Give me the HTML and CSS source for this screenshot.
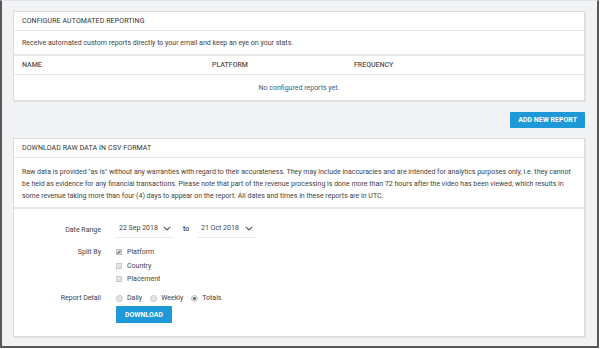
FILE: index.html
```html
<!DOCTYPE html>
<html lang="en">
  <head>
    <meta charset="UTF-8" />
    <meta name="viewport" content="width=device-width, initial-scale=1.0" />
    <title>Reports</title>
    <link rel="stylesheet" href="styles.css">
  </head>
  <body>
    <div class="page">
      <section class="panel">
        <div class="panel-head">CONFIGURE AUTOMATED REPORTING</div>
        <div class="panel-desc">Receive automated custom reports directly to your email and keep an eye on your stats.</div>
        <table class="reports">
          <thead>
            <tr>
              <th class="col-name">NAME</th>
              <th class="col-platform">PLATFORM</th>
              <th>FREQUENCY</th>
            </tr>
          </thead>
          <tbody>
            <tr>
              <td colspan="3" class="empty">No configured reports yet.</td>
            </tr>
          </tbody>
        </table>
      </section>

      <div class="actions">
        <button class="btn">ADD NEW REPORT</button>
      </div>

      <section class="panel">
        <div class="panel-head">DOWNLOAD RAW DATA IN CSV FORMAT</div>
        <p class="panel-desc notice">Raw data is provided "as is" without any warranties with regard to their accurateness. They may include inaccuracies and are intended for analytics purposes only, i.e. they cannot be held as evidence for any financial transactions. Please note that part of the revenue processing is done more than 72 hours after the video has been viewed, which results in some revenue taking more than four (4) days to appear on the report. All dates and times in these reports are in UTC.</p>

        <div class="form">
          <div class="label date-label">Date Range</div>
          <div class="dates">
            <div class="select">
              <span>22 Sep 2018</span>
              <svg width="8" height="5" viewBox="0 0 8 5"><polyline points="0.8,0.8 4,4 7.2,0.8" fill="none" stroke="#555" stroke-width="1.1"/></svg>
            </div>
            <span class="to">to</span>
            <div class="select">
              <span>21 Oct 2018</span>
              <svg width="8" height="5" viewBox="0 0 8 5"><polyline points="0.8,0.8 4,4 7.2,0.8" fill="none" stroke="#555" stroke-width="1.1"/></svg>
            </div>
          </div>

          <div class="label">Split By</div>
          <div class="checks">
            <label class="check"><span class="box on">&#10004;</span>Platform</label>
            <label class="check"><span class="box"></span>Country</label>
            <label class="check"><span class="box"></span>Placement</label>
          </div>

          <div class="label">Report Detail</div>
          <div class="detail">
            <div class="radios">
              <label class="radio"><span class="dot"></span>Daily</label>
              <label class="radio"><span class="dot"></span>Weekly</label>
              <label class="radio"><span class="dot on"></span>Totals</label>
            </div>
            <button class="btn btn-download">DOWNLOAD</button>
          </div>
        </div>
      </section>
    </div>
  </body>
</html>
```

FILE: styles.css
```css
/* Base styles */
html,
body {
  margin: 0;
  padding: 0;
}
body {
  font-family: Roboto, "Liberation Sans", Arial, sans-serif;
  font-size: 7px;
  color: #444;
  background: #fff;
}
.page {
  box-sizing: border-box;
  width: 599px;
  height: 348px;
  background: #f1f2f4;
  border: 2px solid #58585a;
  border-top: 1px solid #e2e3e5;
  padding: 10px 12px 0 11px;
}

/* Panels */
.panel {
  background: #fff;
  border: 1px solid #dcdcdc;
  box-shadow: 1px 1px 0 #e4e4e4;
}
.panel-head {
  height: 18px;
  line-height: 18px;
  padding: 0 8px;
  color: #333;
  border-bottom: 1px solid #e6e6e6;
  letter-spacing: 0.1px;
}
.panel-desc {
  margin: 0;
  height: 23px;
  line-height: 24px;
  padding: 0 8px;
  border-bottom: 2px solid #e8e8e8;
}
.notice {
  height: auto;
  line-height: 12px;
  padding: 8px 8px 5px;
}

/* Reports table */
.reports {
  width: 100%;
  border-collapse: collapse;
}
.reports th,
.reports td {
  text-align: left;
  padding: 0 8px;
  font-weight: 500;
}
.reports th {
  height: 18px;
  color: #555;
  border-bottom: 1px solid #e6e6e6;
}
.col-name {
  width: 174px;
}
.col-platform {
  width: 126px;
}
.reports td.empty {
  height: 25px;
  text-align: center;
  font-weight: 400;
  color: #3d5a78;
}

/* Buttons */
.actions {
  display: flex;
  justify-content: flex-end;
  padding: 11px 0 10px;
}
.btn {
  font-family: inherit;
  font-size: 7px;
  font-weight: 700;
  color: #fff;
  background: #1e98d6;
  border: none;
  border-radius: 1px;
  height: 16px;
  padding: 0 8px;
  cursor: pointer;
}

/* Download form */
.form {
  display: grid;
  grid-template-columns: 87px 1fr;
  column-gap: 15px;
  padding: 13px 0 13px;
}
.label {
  text-align: right;
  line-height: 10px;
  color: #444;
}
.date-label {
  padding-top: 3px;
}
.dates {
  display: flex;
  align-items: flex-start;
  margin-bottom: 9px;
}
.select {
  box-sizing: border-box;
  width: 58px;
  height: 16px;
  display: flex;
  justify-content: space-between;
  align-items: center;
  padding: 0 3px 3px;
  border-bottom: 1px solid #ececec;
}
.to {
  width: 24px;
  text-align: center;
  line-height: 14px;
  font-weight: 500;
}
.checks {
  display: flex;
  flex-direction: column;
  gap: 3.5px;
  margin-bottom: 9px;
}
.check,
.radio {
  display: flex;
  align-items: center;
  line-height: 10px;
}
.box {
  box-sizing: border-box;
  width: 6px;
  height: 6px;
  margin-right: 5px;
  background: #e4e4e4;
  border: 1px solid #c9c9c9;
  font-size: 5px;
  line-height: 4px;
  text-align: center;
  color: #333;
}
.box.on {
  background: #ddd;
  border-color: #bbb;
}
.radios {
  display: flex;
  gap: 8px;
  margin-bottom: 3px;
}
.dot {
  box-sizing: border-box;
  width: 7px;
  height: 7px;
  margin-right: 4px;
  border-radius: 50%;
  background: #e4e4e4;
  border: 1px solid #c6c6c6;
  display: flex;
  align-items: center;
  justify-content: center;
}
.dot.on::after {
  content: "";
  width: 3px;
  height: 3px;
  border-radius: 50%;
  background: #666;
}
.btn-download {
  height: 17px;
  width: 56px;
  padding: 0;
}
```
